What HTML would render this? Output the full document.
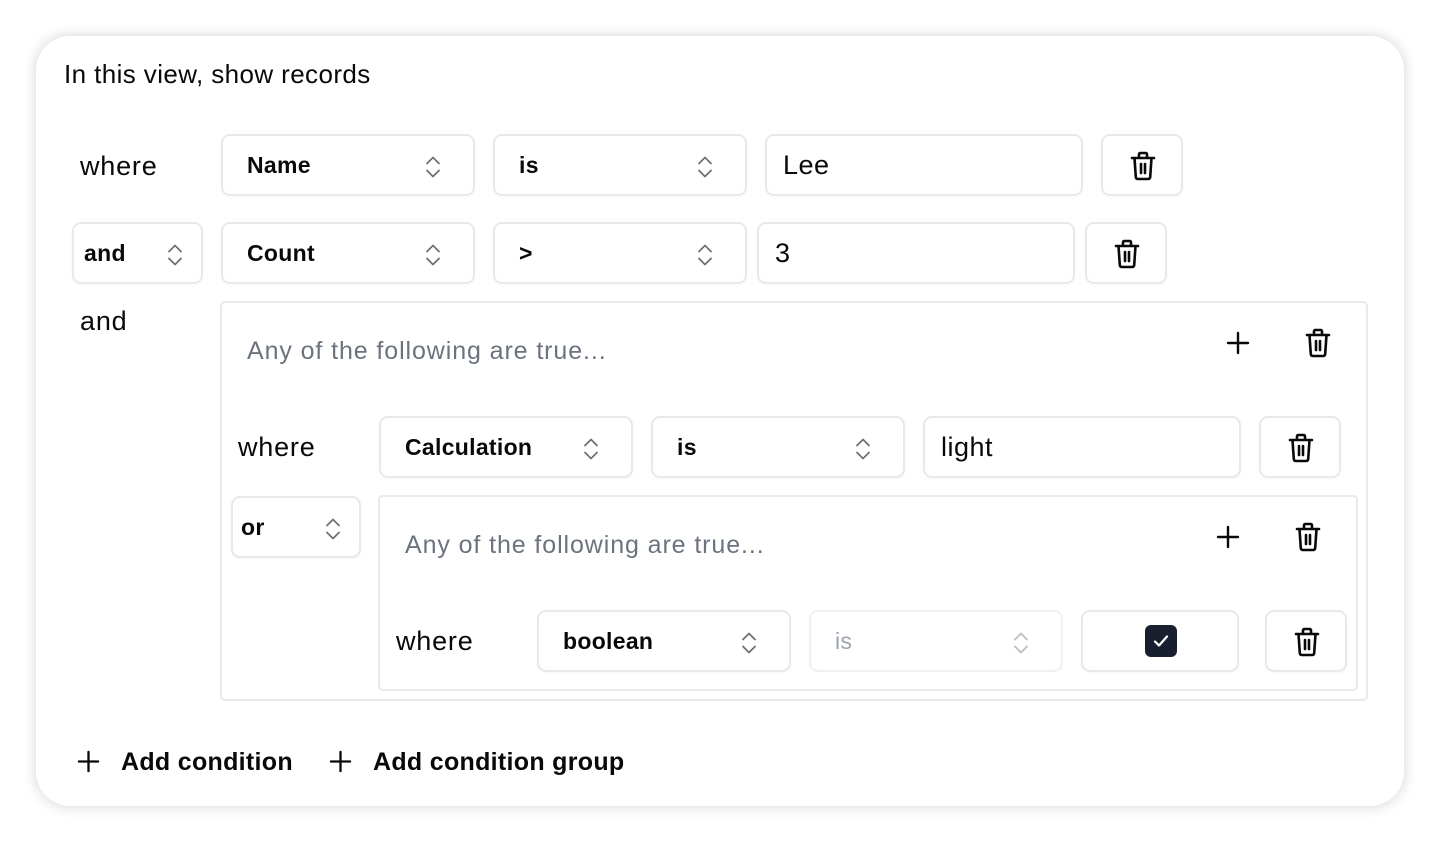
<!DOCTYPE html>
<html><head><meta charset="utf-8"><style>
*{box-sizing:border-box;margin:0;padding:0}
body{width:1440px;height:842px;background:#fff;font-family:"Liberation Sans",sans-serif;color:#09090b;position:relative;overflow:hidden}
.card{position:absolute;left:36px;top:36px;width:1368px;height:770px;background:#fff;border-radius:34px;box-shadow:0 0 14px rgba(0,0,0,.18)}
.a{position:absolute}
.t{position:absolute;font-size:27px;line-height:30px;white-space:nowrap;letter-spacing:.8px}
.box{position:absolute;border:2px solid #e9e9ec;border-radius:9px;background:#fff;box-shadow:0 1px 2px rgba(0,0,0,.04);height:62px}
.sel{font-size:23px;font-weight:bold;display:flex;align-items:center;padding-left:24px}
.sel span{letter-spacing:.3px}
.chev{position:absolute;right:30px;top:18px}
.inp{font-size:27px;display:flex;align-items:center;padding-left:16px;letter-spacing:.5px}
.grp{position:absolute;border:2px solid #e9e9ec;border-radius:5px}
.hdr{position:absolute;font-size:25px;color:#6b7280;white-space:nowrap;letter-spacing:.9px}
.ico{position:absolute}
</style></head><body>
<div class="card"></div>
<div class="t" style="left:64px;top:59px;font-size:26px;letter-spacing:.4px">In this view, show records</div>

<svg width="0" height="0" style="position:absolute">
<defs>
<symbol id="chev" viewBox="0 0 20 26"><path d="M4 9.5l6-6 6 6M4 16.5l6 6 6-6" fill="none" stroke="#71717a" stroke-width="1.8" stroke-linecap="round" stroke-linejoin="round"/></symbol>
<symbol id="trash" viewBox="0 0 26 30"><path d="M2 7h22M9 7V3.5Q9 2 10.5 2h5Q17 2 17 3.5V7M4.5 7l1.3 19Q6 28 8 28h10q2 0 2.2-2L21.5 7M11 13v9M15 13v9" fill="none" stroke="#09090b" stroke-width="2.6" stroke-linecap="round" stroke-linejoin="round"/></symbol>
<symbol id="plus" viewBox="0 0 24 24"><path d="M12 2v20M2 12h20" fill="none" stroke="#09090b" stroke-width="2.4" stroke-linecap="round"/></symbol>
</defs></svg>

<div class="t" style="left:80px;top:151px">where</div>
<div class="box sel" style="left:221px;top:134px;width:254px"><span>Name</span><svg class="chev" width="20" height="26"><use href="#chev"/></svg></div>
<div class="box sel" style="left:493px;top:134px;width:254px"><span>is</span><svg class="chev" width="20" height="26"><use href="#chev"/></svg></div>
<div class="box inp" style="left:765px;top:134px;width:318px">Lee</div>
<div class="box" style="left:1101px;top:134px;width:82px"><svg class="ico" style="left:27px;top:15px" width="26" height="30"><use href="#trash"/></svg></div>

<div class="box sel" style="left:72px;top:222px;width:131px;padding-left:10px"><span>and</span><svg class="chev" style="right:16px" width="20" height="26"><use href="#chev"/></svg></div>
<div class="box sel" style="left:221px;top:222px;width:254px"><span>Count</span><svg class="chev" width="20" height="26"><use href="#chev"/></svg></div>
<div class="box sel" style="left:493px;top:222px;width:254px"><span>&gt;</span><svg class="chev" width="20" height="26"><use href="#chev"/></svg></div>
<div class="box inp" style="left:757px;top:222px;width:318px;padding-left:16px">3</div>
<div class="box" style="left:1085px;top:222px;width:82px"><svg class="ico" style="left:27px;top:15px" width="26" height="30"><use href="#trash"/></svg></div>

<div class="t" style="left:80px;top:306px">and</div>
<div class="grp" style="left:220px;top:301px;width:1148px;height:400px"></div>
<div class="hdr" style="left:247px;top:337px">Any of the following are true...</div>
<svg class="ico" style="left:1226px;top:331px" width="24" height="24"><use href="#plus"/></svg>
<svg class="ico" style="left:1305px;top:328px" width="26" height="30"><use href="#trash"/></svg>

<div class="t" style="left:238px;top:432px">where</div>
<div class="box sel" style="left:379px;top:416px;width:254px"><span>Calculation</span><svg class="chev" width="20" height="26"><use href="#chev"/></svg></div>
<div class="box sel" style="left:651px;top:416px;width:254px"><span>is</span><svg class="chev" width="20" height="26"><use href="#chev"/></svg></div>
<div class="box inp" style="left:923px;top:416px;width:318px">light</div>
<div class="box" style="left:1259px;top:416px;width:82px"><svg class="ico" style="left:27px;top:15px" width="26" height="30"><use href="#trash"/></svg></div>

<div class="box sel" style="left:231px;top:496px;width:130px;padding-left:8px"><span>or</span><svg class="chev" style="right:16px" width="20" height="26"><use href="#chev"/></svg></div>

<div class="grp" style="left:378px;top:495px;width:980px;height:196px"></div>
<div class="hdr" style="left:405px;top:531px">Any of the following are true...</div>
<svg class="ico" style="left:1216px;top:525px" width="24" height="24"><use href="#plus"/></svg>
<svg class="ico" style="left:1295px;top:522px" width="26" height="30"><use href="#trash"/></svg>

<div class="t" style="left:396px;top:626px">where</div>
<div class="box sel" style="left:537px;top:610px;width:254px"><span>boolean</span><svg class="chev" width="20" height="26"><use href="#chev"/></svg></div>
<div class="box sel" style="left:809px;top:610px;width:254px;color:#9ca3af;font-weight:normal;border-color:#f0f0f2;box-shadow:none"><span>is</span><svg class="chev" width="20" height="26" style="opacity:.45"><use href="#chev"/></svg></div>
<div class="box" style="left:1081px;top:610px;width:158px"><div class="a" style="left:62px;top:13px;width:32px;height:32px;background:#18202f;border-radius:6px"><svg width="32" height="32" viewBox="0 0 32 32"><path d="M10 16.5l4 4 8-9" fill="none" stroke="#fff" stroke-width="2.2" stroke-linecap="round" stroke-linejoin="round"/></svg></div></div>
<div class="box" style="left:1265px;top:610px;width:82px"><svg class="ico" style="left:27px;top:15px" width="26" height="30"><use href="#trash"/></svg></div>

<svg class="ico" style="left:77px;top:750px" width="23" height="23"><use href="#plus"/></svg>
<div class="t" style="left:121px;top:747px;font-weight:bold;font-size:25px;letter-spacing:.3px">Add condition</div>
<svg class="ico" style="left:329px;top:750px" width="23" height="23"><use href="#plus"/></svg>
<div class="t" style="left:373px;top:747px;font-weight:bold;font-size:25px;letter-spacing:.3px">Add condition group</div>
</body></html>
